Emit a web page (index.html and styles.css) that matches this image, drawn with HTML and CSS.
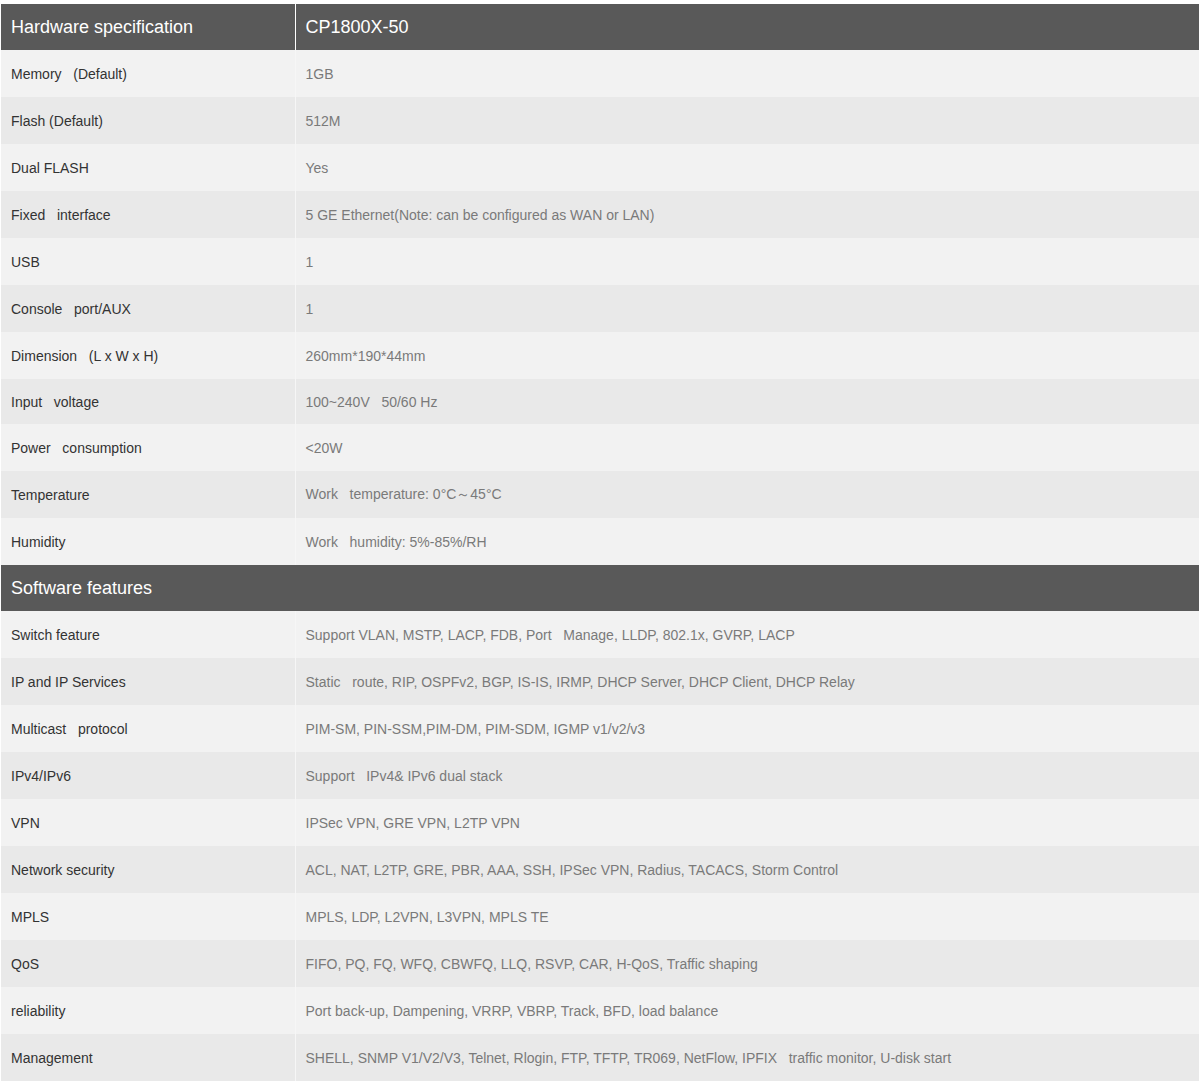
FILE: index.html
```html
<!DOCTYPE html>
<html>
<head>
<meta charset="utf-8">
<link rel="stylesheet" href="styles.css">
</head>
<body>
<div class="wrap">
<table class="spec">
  <colgroup><col class="c1"><col class="c2"></colgroup>
  <tr class="head"><th class="k">Hardware specification</th><th class="v">CP1800X-50</th></tr>
  <tr class="odd"><td class="k">Memory &nbsp; (Default)</td><td class="v">1GB</td></tr>
  <tr class="even"><td class="k">Flash (Default)</td><td class="v">512M</td></tr>
  <tr class="odd"><td class="k">Dual FLASH</td><td class="v">Yes</td></tr>
  <tr class="even"><td class="k">Fixed &nbsp; interface</td><td class="v">5 GE Ethernet(Note: can be configured as WAN or LAN)</td></tr>
  <tr class="odd"><td class="k">USB</td><td class="v">1</td></tr>
  <tr class="even"><td class="k">Console &nbsp; port/AUX</td><td class="v">1</td></tr>
  <tr class="odd"><td class="k">Dimension &nbsp; (L x W x H)</td><td class="v">260mm*190*44mm</td></tr>
  <tr class="even short"><td class="k">Input &nbsp; voltage</td><td class="v">100~240V &nbsp; 50/60 Hz</td></tr>
  <tr class="odd"><td class="k">Power &nbsp; consumption</td><td class="v">&lt;20W</td></tr>
  <tr class="even"><td class="k">Temperature</td><td class="v">Work &nbsp; temperature: 0°C～45°C</td></tr>
  <tr class="odd"><td class="k">Humidity</td><td class="v">Work &nbsp; humidity: 5%-85%/RH</td></tr>
  <tr class="head"><th class="full" colspan="2">Software features</th></tr>
  <tr class="odd"><td class="k">Switch feature</td><td class="v">Support VLAN, MSTP, LACP, FDB, Port &nbsp; Manage, LLDP, 802.1x, GVRP, LACP</td></tr>
  <tr class="even"><td class="k">IP and IP Services</td><td class="v">Static &nbsp; route, RIP, OSPFv2, BGP, IS-IS, IRMP, DHCP Server, DHCP Client, DHCP Relay</td></tr>
  <tr class="odd"><td class="k">Multicast &nbsp; protocol</td><td class="v">PIM-SM, PIN-SSM,PIM-DM, PIM-SDM, IGMP v1/v2/v3</td></tr>
  <tr class="even"><td class="k">IPv4/IPv6</td><td class="v">Support &nbsp; IPv4&amp; IPv6 dual stack</td></tr>
  <tr class="odd"><td class="k">VPN</td><td class="v">IPSec VPN, GRE VPN, L2TP VPN</td></tr>
  <tr class="even"><td class="k">Network security</td><td class="v">ACL, NAT, L2TP, GRE, PBR, AAA, SSH, IPSec VPN, Radius, TACACS, Storm Control</td></tr>
  <tr class="odd"><td class="k">MPLS</td><td class="v">MPLS, LDP, L2VPN, L3VPN, MPLS TE</td></tr>
  <tr class="even"><td class="k">QoS</td><td class="v">FIFO, PQ, FQ, WFQ, CBWFQ, LLQ, RSVP, CAR, H-QoS, Traffic shaping</td></tr>
  <tr class="odd"><td class="k">reliability</td><td class="v">Port back-up, Dampening, VRRP, VBRP, Track, BFD, load balance</td></tr>
  <tr class="even"><td class="k">Management</td><td class="v">SHELL, SNMP V1/V2/V3, Telnet, Rlogin, FTP, TFTP, TR069, NetFlow, IPFIX &nbsp; traffic monitor, U-disk start</td></tr>
</table>
</div>
</body>
</html>
```

FILE: styles.css
```css
html, body {
  margin: 0;
  padding: 0;
  background: #ffffff;
}
.wrap {
  padding: 4px 1px 0 1px;
}
.spec {
  width: 1198px;
  border-collapse: collapse;
  table-layout: fixed;
  font-family: "Liberation Sans", Arial, sans-serif;
}
.c1 { width: 294px; }
.spec th, .spec td {
  padding: 0 10px;
  text-align: left;
  vertical-align: middle;
  white-space: nowrap;
}
.head th {
  background: #595959;
  color: #ffffff;
  font-size: 18px;
  font-weight: normal;
  height: 46px;
}
.head th.k { border-right: 1px solid #ffffff; }
.spec td {
  height: 47px;
  font-size: 14px;
}
.short td { height: 45px; }
.odd td { background: #f2f2f2; }
.even td { background: #e9e9e9; }
td.k {
  color: #333333;
  border-right: 1px solid #f6f6f6;
}
td.v {
  color: #7a7a7a;
}
```
